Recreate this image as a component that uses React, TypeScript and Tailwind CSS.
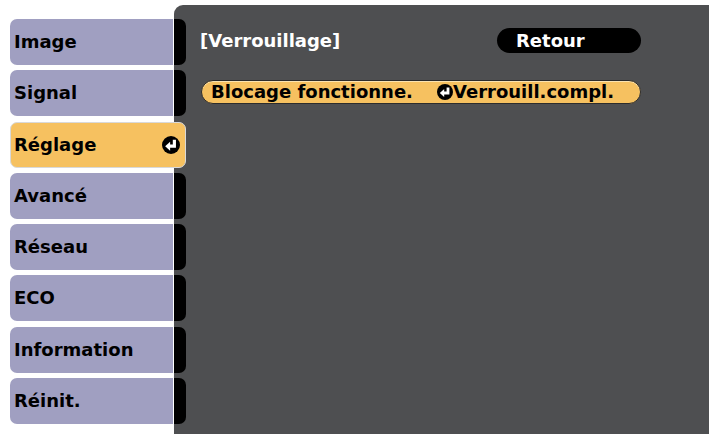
import React from "react";

const font = { fontFamily: '"DejaVu Sans", "Liberation Sans", sans-serif' };

function EnterIcon({ size = 16 }: { size?: number }) {
  return (
    <svg width={size} height={size} viewBox="0 0 16 16" className="shrink-0">
      <circle cx="8" cy="8" r="8" fill="#000" />
      <path d="M11 3.4 V9 H6.4" fill="none" stroke="#fff" strokeWidth="2.8" />
      <path d="M2.8 9 L7.2 5 L7.2 13 Z" fill="#fff" />
    </svg>
  );
}

const items = ["Image", "Signal", "Réglage", "Avancé", "Réseau", "ECO", "Information", "Réinit."];

export default function App() {
  return (
    <div
      className="grid w-[709px] h-[434px] bg-white overflow-hidden text-[18px] font-bold leading-none"
      style={font}
    >
      <div className="col-start-1 row-start-1 ml-[174px] mt-[5px] bg-[#4e4f51] rounded-tl-[9px] pl-[27px] pt-[23px]">
        <div className="w-[440px] h-[25px] flex items-center">
          <span className="text-white -ml-[1px]">[Verrouillage]</span>
          <div className="ml-auto w-[144px] h-[25px] bg-black rounded-full flex items-center pl-[19px] text-white">
            Retour
          </div>
        </div>
        <div className="mt-[27px] w-[440px] h-[24px] bg-[#f6c160] border border-[#2c2c2c] rounded-full flex items-center pl-[9px] text-black shadow-[inset_0_1px_0_#fbe3b0]">
          <span className="w-[226px]">Blocage fonctionne.</span>
          <EnterIcon size={16} />
          <span>Verrouill.compl.</span>
        </div>
      </div>
      <div className="col-start-1 row-start-1 pt-[19px] pl-[10px] flex flex-col gap-[5.3px]">
        {items.map((t) =>
          t === "Réglage" ? (
            <div
              key={t}
              className="h-[46px] w-[176px] bg-[#f6c160] border border-[#d9d9d9] rounded-[7px] flex items-center pl-[3px] pr-[5px] text-black"
            >
              <span>{t}</span>
              <span className="ml-auto">
                <EnterIcon size={18} />
              </span>
            </div>
          ) : (
            <div key={t} className="h-[46px] flex">
              <div className="w-[163px] bg-[#a09fc1] rounded-l-[7px] flex items-center pl-[4px] text-black">
                {t}
              </div>
              <div className="w-px bg-white" />
              <div className="w-[12px] bg-black rounded-r-[7px]" />
            </div>
          )
        )}
      </div>
    </div>
  );
}
